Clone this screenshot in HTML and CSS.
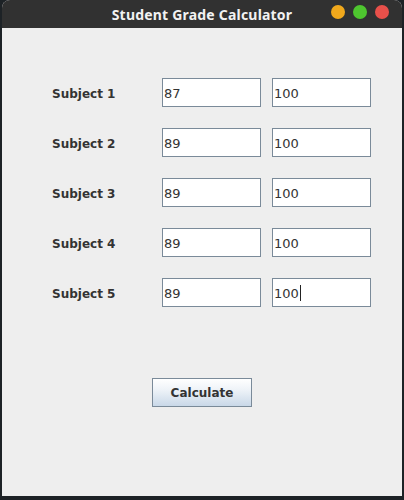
FILE: index.html
```html
<!DOCTYPE html>
<html>
<head>
<meta charset="utf-8">
<link rel="stylesheet" href="styles.css">
</head>
<body>
<div class="window">
  <div class="titlebar">
    <span class="title">Student Grade Calculator</span>
    <div class="controls">
      <span class="dot min"></span>
      <span class="dot max"></span>
      <span class="dot close"></span>
    </div>
  </div>
  <div class="content">
    <div class="rows">
      <div class="row"><span class="label">Subject 1</span><div class="field">87</div><div class="field">100</div></div>
      <div class="row"><span class="label">Subject 2</span><div class="field">89</div><div class="field">100</div></div>
      <div class="row"><span class="label">Subject 3</span><div class="field">89</div><div class="field">100</div></div>
      <div class="row"><span class="label">Subject 4</span><div class="field">89</div><div class="field">100</div></div>
      <div class="row"><span class="label">Subject 5</span><div class="field">89</div><div class="field">100<span class="caret"></span></div></div>
    </div>
    <div class="actions">
      <button class="btn">Calculate</button>
    </div>
  </div>
</div>
</body>
</html>
```
FILE: styles.css
```css
* { box-sizing: border-box; }
html, body { margin: 0; padding: 0; }
body {
  background: #1d2226;
  width: 404px;
  height: 500px;
  overflow: hidden;
  font-family: "DejaVu Sans", sans-serif;
}
.window {
  margin-left: 2px;
  width: 400px;
  height: 496px;
  display: flex;
  flex-direction: column;
  background: #eeeeee;
  border-radius: 8px 8px 0 0;
  overflow: hidden;
}
.titlebar {
  height: 28px;
  background: #313131;
  display: flex;
  align-items: center;
  justify-content: center;
  position: relative;
}
.title {
  color: #f2f2f2;
  font-family: "Noto Sans", "DejaVu Sans", sans-serif;
  font-weight: bold;
  font-size: 14px;
  letter-spacing: 0.2px;
}
.controls {
  position: absolute;
  right: 13px;
  top: 5px;
  display: flex;
  gap: 8px;
}
.dot {
  width: 14px;
  height: 14px;
  border-radius: 50%;
  display: block;
}
.dot.min { background: #f0a81c; }
.dot.max { background: #4ec52f; }
.dot.close { background: #e8504a; }
.content {
  flex: 1;
  padding: 50px 0 0 50px;
}
.rows {
  display: flex;
  flex-direction: column;
  gap: 21px;
}
.row {
  display: flex;
  align-items: center;
  height: 29px;
}
.label {
  width: 110px;
  font-weight: bold;
  font-size: 12px;
  color: #333333;
  padding-top: 2px;
}
.field {
  width: 99px;
  height: 29px;
  background: #ffffff;
  border: 1px solid #7a8a99;
  font-size: 13px;
  color: #333333;
  padding-left: 1px;
  padding-top: 1px;
  display: flex;
  align-items: center;
}
.field + .field { margin-left: 11px; }
.caret {
  display: inline-block;
  width: 1px;
  height: 16px;
  background: #222;
  margin-left: 1px;
}
.actions {
  display: flex;
  justify-content: center;
  margin-left: -50px;
  margin-top: 71px;
}
.btn {
  width: 100px;
  height: 29px;
  border: 1px solid #7a8a99;
  background: linear-gradient(#ffffff, #eef3f8 40%, #c9d8e8);
  font-family: "DejaVu Sans", sans-serif;
  font-weight: bold;
  font-size: 12px;
  color: #333333;
  padding: 1px 0 0 0;
}
```
